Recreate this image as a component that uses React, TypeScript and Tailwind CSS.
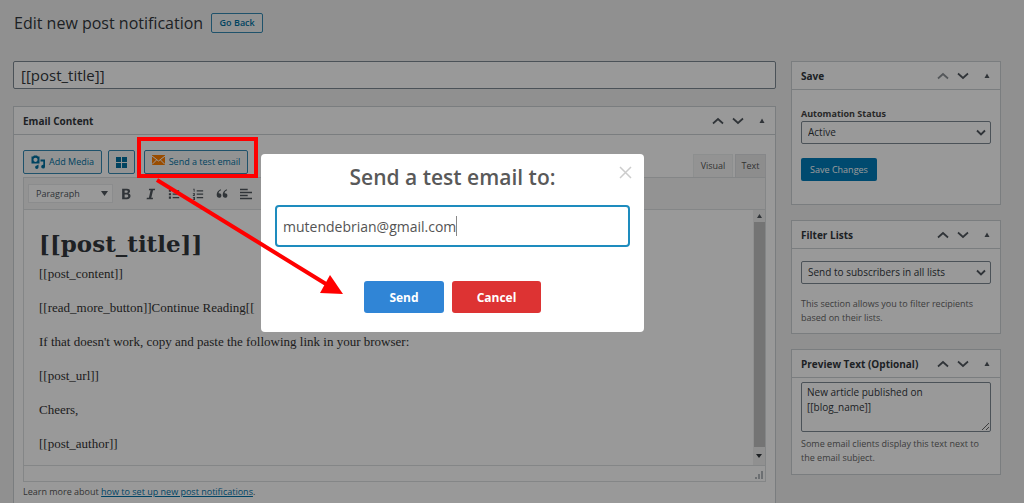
import { useState } from 'react';
import type { ReactNode } from 'react';

// Toolbar glyphs for the visual editor
const toolbarItems = [
  { name: 'Bold', icon: <path d="M2.500 1h5.700c2.200 0 3.500 1 3.500 2.800 0 1.300-.7 2.100-1.800 2.500 1.500.3 2.400 1.300 2.400 2.900 0 2.300-1.700 3.800-4.300 3.800H2.500zM5.400 3v2.600h2.100c1 0 1.600-.5 1.600-1.300S8.500 3 7.500 3zM5.400 7.500V11h2.400c1.200 0 1.800-.6 1.800-1.700S8.900 7.500 7.700 7.500z" fillRule="evenodd" /> },
  { name: 'Italic', icon: <path d="M6 1h7l-.4 1.700h-2L8.500 11.300h2.100L10.200 13H3l.4-1.700h2.300l2-8.600H5.600z" /> },
  { name: 'Bulleted list', icon: <path d="M1 2h2.500v2.500H1zM5.500 2.500H13V4H5.500zM1 6h2.500v2.500H1zM5.500 6.500H13V8H5.500zM1 10h2.500v2.500H1zM5.500 10.500H13V12H5.500z" /> },
  { name: 'Numbered list', icon: <path d="M1.500 1H3v3.500H2V2h-.5zM5.500 2.500H13V4H5.500zM1 6h2.500v1.500L2.200 8.500h1.300v.8H1v-.8l1.500-1.500H1zM5.500 6.500H13V8H5.500zM1 10.500h2.500V14H1v-.8h1.500v-.6H1.200v-.7h1.300v-.6H1zM5.500 10.500H13V12H5.500z" /> },
  { name: 'Blockquote', icon: <path d="M6 2.500C4 3.300 3 4.700 3 6.200c1.800-.3 3.300.8 3.300 2.600 0 1.600-1.100 2.700-2.600 2.700C1.900 11.500.8 10.100.8 8c0-3.100 1.800-5.400 4.700-6.500zM13 2.500c-2 .8-3 2.200-3 3.700 1.800-.3 3.300.8 3.300 2.600 0 1.600-1.100 2.700-2.600 2.700-1.800 0-2.900-1.400-2.900-3.500 0-3.100 1.800-5.400 4.700-6.500z" /> },
  { name: 'Align left', icon: <path d="M0 1h9v1.700H0zM0 4.500h14v1.700H0zM0 8h9v1.700H0zM0 11.500h14v1.700H0z" /> },
];

const outlineButton =
  'flex items-center justify-center rounded-xs border border-[#3489b3] bg-[#f3f5f6] text-[#0071a1]';

function PanelControls({ firstMuted = false }: { firstMuted?: boolean }) {
  return (
    <div className="flex items-center gap-2 text-[#50575e]">
      <button type="button" aria-label="Move up" className={firstMuted ? 'text-[#8c9196]' : ''}>
        <svg className="h-3 w-3" viewBox="0 0 12 12" fill="none" stroke="currentColor" strokeWidth="1.700">
          <path d="M1 8.500L6 4l5 4.500" />
        </svg>
      </button>
      <button type="button" aria-label="Move down">
        <svg className="h-3 w-3" viewBox="0 0 12 12" fill="none" stroke="currentColor" strokeWidth="1.700">
          <path d="M1 3.500L6 8l5-4.500" />
        </svg>
      </button>
      <button type="button" aria-label="Toggle panel" className="ml-1">
        <svg className="h-3 w-3" viewBox="0 0 12 12" fill="currentColor">
          <path d="M6 3.500L8.500 8h-5z" />
        </svg>
      </button>
    </div>
  );
}

function Panel({ title, firstMuted, className = '', children }: { title: string; firstMuted?: boolean; className?: string; children: ReactNode }) {
  return (
    <section className={`flex flex-col border border-[#ccd0d4] bg-white ${className}`}>
      <header className="flex h-7 shrink-0 items-center justify-between border-b border-[#ccd0d4] pl-[9px] pr-[7px] pt-px">
        <h2 className="text-[10px] font-bold text-[#32373c]">{title}</h2>
        <PanelControls firstMuted={firstMuted} />
      </header>
      {children}
    </section>
  );
}

function SelectBox({ id, label, option }: { id: string; label?: string; option: string }) {
  return (
    <div className="relative">
      <select
        id={id}
        aria-label={label}
        className="block h-[23px] w-full appearance-none rounded-xs border border-[#7e8993] bg-white pl-[6px] pr-6 text-[10px] text-[#32373c]"
      >
        <option>{option}</option>
      </select>
      <svg className="pointer-events-none absolute right-1 top-[6px] h-3 w-3 text-[#50575e]" viewBox="0 0 12 12" fill="none" stroke="currentColor" strokeWidth="1.800">
        <path d="M2 3.500l4 4 4-4" />
      </svg>
    </div>
  );
}

function Editor() {
  return (
    <div className="border border-[#dcdfe2]">
      {/* Formatting toolbar */}
      <div className="flex h-8 items-center border-b border-[#dcdfe2] bg-[#f5f5f5] pl-1 text-[#50575e]">
        <button type="button" className="flex h-[19px] w-[85px] items-center justify-between border border-[#e8eaec] bg-white pl-[7px] pr-1 text-[9px]">
          Paragraph
          <svg className="h-[6px] w-[7px]" viewBox="0 0 7 6" fill="currentColor">
            <path d="M0 0h7L3.500 5z" />
          </svg>
        </button>
        <div className="ml-[7px] flex gap-3">
          {toolbarItems.map((item) => (
            <button key={item.name} type="button" aria-label={item.name}>
              <svg className="h-3 w-3" viewBox="0 0 14 14" fill="currentColor">
                {item.icon}
              </svg>
            </button>
          ))}
        </div>
      </div>

      {/* Message body */}
      <div className="flex h-[255px] bg-white">
        <div className="flex-1 overflow-hidden whitespace-nowrap pl-[15px] pt-[17px] font-['Liberation_Serif',serif] text-[13px] leading-[17px] text-[#333]">
          <h1 className="mb-[5px] font-['DejaVu_Serif',serif] text-[23px] font-bold leading-[33px] text-[#32373c]">[[post_title]]</h1>
          <p className="mb-[17px]">[[post_content]]</p>
          <p className="mb-[17px]">[[read_more_button]]Continue Reading[[</p>
          <p className="mb-[17px]">If that doesn't work, copy and paste the following link in your browser:</p>
          <p className="mb-[17px]">[[post_url]]</p>
          <p className="mb-[17px]">Cheers,</p>
          <p>[[post_author]]</p>
        </div>
        <div className="flex w-3 flex-col items-center bg-[#f1f1f1]">
          <svg className="my-1 h-1 w-[5px]" viewBox="0 0 5 4" fill="#50575e">
            <path d="M0 4h5L2.500 0z" />
          </svg>
          <div className="w-[11px] flex-1 bg-[#c1c1c1]" />
          <svg className="my-[7px] h-1 w-[6px]" viewBox="0 0 6 4" fill="#32373c">
            <path d="M0 0h6L3 4z" />
          </svg>
        </div>
      </div>

      {/* Status bar */}
      <div className="flex h-4 items-end justify-end border-t border-[#dcdfe2] pb-[2px] pr-[2px]">
        <svg className="h-2 w-2" viewBox="0 0 8 8" fill="#b4b9be">
          <path d="M6 0h2v8H6zM3 3h2v5H3zM0 6h2v2H0z" />
        </svg>
      </div>
    </div>
  );
}

function TestEmailModal() {
  const [email, setEmail] = useState('mutendebrian@gmail.com');

  return (
    <div className="fixed inset-0 flex items-start justify-center bg-black/40 pr-[119px] pt-[154px]">
      <div role="dialog" aria-labelledby="modal-title" className="relative flex w-[383px] flex-col items-center rounded-[4px] bg-white px-[14px] pb-[19px] pt-2">
        <h2 id="modal-title" className="text-[21px] font-semibold leading-[30px] text-[#595959]">Send a test email to:</h2>
        <button type="button" aria-label="Close" className="absolute right-3 top-3 text-[#ccc]">
          <svg className="h-[13px] w-[13px]" viewBox="0 0 13 13" fill="none" stroke="currentColor" strokeWidth="1.500">
            <path d="M1 1l11 11M12 1L1 12" />
          </svg>
        </button>
        <div className="mt-[13px] flex h-[42px] w-full items-center rounded-[4px] border-2 border-[#1e8cbe] px-[6px]">
          <input
            type="email"
            aria-label="Email address"
            value={email}
            onChange={(e) => setEmail(e.target.value)}
            className="field-sizing-content text-[14px] text-[#545454] outline-none"
          />
          <span className="h-5 w-px bg-[#888]" />
        </div>
        <div className="mt-[34px] flex gap-2">
          <button type="button" className="h-8 w-[80px] rounded-[3px] bg-[#3085d6] pt-px text-[12px] font-bold text-white">Send</button>
          <button type="button" className="h-8 w-[89px] rounded-[3px] bg-[#dd3333] pt-px text-[12px] font-bold text-white">Cancel</button>
        </div>
      </div>

      {/* Callout box and arrow */}
      <svg className="pointer-events-none absolute left-0 top-0 h-[320px] w-[360px]" viewBox="0 0 360 320" fill="none" stroke="#ff0000">
        <rect x="139" y="139" width="117" height="37" strokeWidth="4" />
        <path d="M157 180l169 104" strokeWidth="4" />
        <path d="M343 294l-23-1 10-18z" fill="#ff0000" stroke="none" />
      </svg>
    </div>
  );
}

export default function App() {
  return (
    <div className="flex h-screen flex-col overflow-hidden bg-[#f1f1f1] font-['Open_Sans',sans-serif] text-[#444]">
      <div className="flex shrink-0 items-center gap-2 pl-[14px] pt-[10px]">
        <h1 className="text-[16px] leading-[26px] text-[#32373c]">Edit new post notification</h1>
        <button type="button" className={`${outlineButton} h-5 w-[52px] text-[9px] font-semibold`}>Go Back</button>
      </div>

      <div className="mt-[25px] flex min-h-0 flex-1 items-stretch gap-[15px] pl-[13px] pr-[23px]">
        <main className="flex min-w-0 flex-1 flex-col">
          <input
            aria-label="Email subject"
            defaultValue="[[post_title]]"
            className="h-7 w-full shrink-0 rounded-xs border border-[#7e8993] bg-white px-[7px] text-[15px] text-[#32373c]"
          />
          <Panel title="Email Content" className="mt-[17px] flex-1 border-b-0">
            <div className="px-[9px] pt-[15px]">
              <div className="flex h-[27px] items-start justify-between text-[9px]">
                <div className="flex">
                  <button type="button" className={`${outlineButton} h-6 w-[79px] gap-1`}>
                    <svg className="h-[14px] w-[14px]" viewBox="0 0 14 14" fill="currentColor">
                      <path fillRule="evenodd" d="M2 1.500L3 .5h3l1 1h1.500v7H.5v-7zM4.500 2.700a2.100 2.100 0 100 4.200 2.100 2.100 0 000-4.200z" />
                      <path d="M9.500 4.500H14v7.200a1.900 1.900 0 11-1.700-1.900V6.500H9.500zM7.500 9.500v2.700a1.700 1.700 0 11-1.700-1.700z" />
                    </svg>
                    Add Media
                  </button>
                  <button type="button" aria-label="Insert block" className={`${outlineButton} ml-[6px] h-6 w-[27px]`}>
                    <svg className="h-[11px] w-[11px]" viewBox="0 0 11 11" fill="currentColor">
                      <path d="M0 0h5v5H0zM6 0h5v5H6zM0 6h5v5H0zM6 6h5v5H6z" />
                    </svg>
                  </button>
                  <button type="button" className={`${outlineButton} ml-[9px] h-6 w-[104px] gap-1`}>
                    <svg className="mb-1 h-[10px] w-[13px]" viewBox="0 0 13 10">
                      <path fill="#ff7f00" d="M0 0h13v10H0z" />
                      <path fill="none" stroke="#fff" d="M0 1l6.500 5L13 1M0 9.500L4.500 5M13 9.500L8.500 5" />
                    </svg>
                    Send a test email
                  </button>
                </div>
                <div className="flex gap-[2px] self-end text-[#555]">
                  <button type="button" className="h-[23px] w-[40px] border border-b-0 border-[#eceeef] bg-[#f5f5f5]">Visual</button>
                  <button type="button" className="h-[23px] w-[31px] border border-b-0 border-[#e0e2e4] bg-[#ebebeb]">Text</button>
                </div>
              </div>
              <Editor />
              <p className="mt-[2px] text-[9px] leading-4 text-[#555]">
                Learn more about <a href="#" className="text-[#0073aa] underline">how to set up new post notifications</a>.
              </p>
            </div>
          </Panel>
        </main>

        <aside className="flex w-[210px] shrink-0 flex-col gap-[15px] text-[9px]">
          <Panel title="Save" firstMuted>
            <div className="px-[9px] pb-[23px] pt-[17px]">
              <label htmlFor="status" className="block font-bold leading-[14px]">Automation Status</label>
              <SelectBox id="status" option="Active" />
              <button type="button" className="mt-[14px] h-[23px] w-[76px] rounded-xs bg-[#007cba] text-white">Save Changes</button>
            </div>
          </Panel>
          <Panel title="Filter Lists">
            <div className="px-[9px] pb-[8px] pt-[12px]">
              <SelectBox id="lists" label="Filter lists" option="Send to subscribers in all lists" />
              <p className="mt-[13px] leading-[14px] text-[#666]">This section allows you to filter recipients based on their lists.</p>
            </div>
          </Panel>
          <Panel title="Preview Text (Optional)">
            <div className="px-[9px] pb-[9px] pt-1">
              <textarea
                aria-label="Preview text"
                defaultValue={'New article published on\n[[blog_name]]'}
                className="block h-[50px] w-full rounded-xs border border-[#7e8993] bg-white px-[5px] py-[2px] text-[10px] leading-[15px] text-[#32373c]"
              />
              <p className="mt-[5px] leading-[14px] text-[#666]">Some email clients display this text next to the email subject.</p>
            </div>
          </Panel>
        </aside>
      </div>

      <TestEmailModal />
    </div>
  );
}
